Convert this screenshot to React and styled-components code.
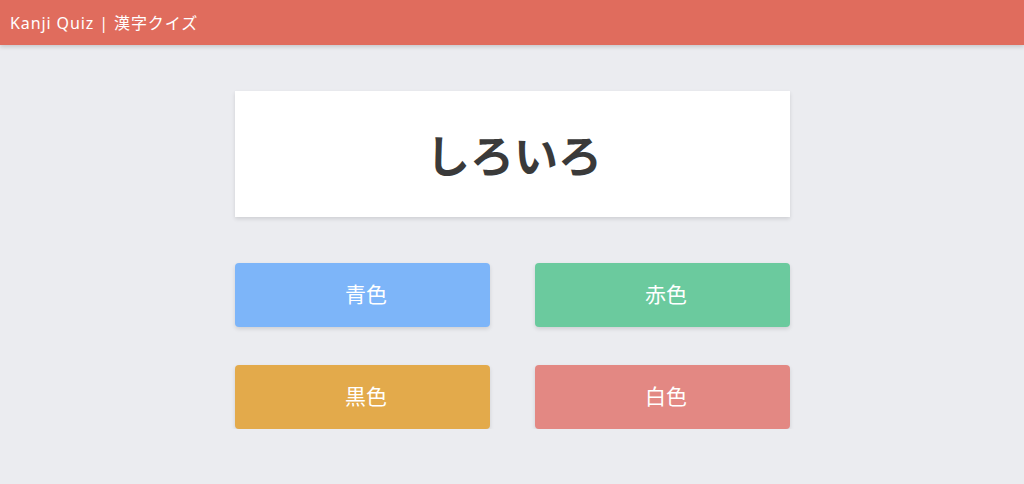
import styled, { createGlobalStyle } from 'styled-components';

const GlobalStyle = createGlobalStyle`
  body {
    margin: 0;
    background-color: #ebecf0;
    font-family: "Noto Sans", "Noto Sans CJK JP", sans-serif;
  }
`;

const choices = [
  { label: "青色", color: "#7db5f9" },
  { label: "赤色", color: "#6bca9e" },
  { label: "黒色", color: "#e3aa4b" },
  { label: "白色", color: "#e38883" },
];

const App = () => {
  return (
    <>
      <GlobalStyle />
      <Header>
        <HeaderTitle>Kanji Quiz | 漢字クイズ</HeaderTitle>
      </Header>
      <Main>
        <QuestionCard>
          <Question>しろいろ</Question>
        </QuestionCard>
        <Choices>
          {choices.map((c) => (
            <Choice key={c.label} color={c.color}>{c.label}</Choice>
          ))}
        </Choices>
      </Main>
    </>
  );
};

const Header = styled.header`
  height: 45px;
  background-color: #e06c5d;
  display: flex;
  align-items: center;
  padding: 0 10px;
  box-shadow: 0 2px 4px rgba(0, 0, 0, 0.15);
`;

const HeaderTitle = styled.h1`
  margin: 0 0 2px;
  color: white;
  font-size: 16px;
  font-weight: 400;
  letter-spacing: 0.9px;
`;

const Main = styled.main`
  width: 555px;
  margin: 46px auto 0;
`;

const QuestionCard = styled.div`
  height: 126px;
  background-color: white;
  display: flex;
  align-items: center;
  justify-content: center;
  box-shadow: 0 2px 4px rgba(0, 0, 0, 0.12);
`;

const Question = styled.h2`
  margin: 0 0 0 4px;
  font-size: 44px;
  font-weight: 700;
  color: #3a3a3a;
  letter-spacing: 0;
`;

const Choices = styled.div`
  margin-top: 46px;
  display: grid;
  grid-template-columns: 1fr 1fr;
  column-gap: 45px;
  row-gap: 38px;
`;

const Choice = styled.button`
  height: 64px;
  padding: 0 0 4px 8px;
  border: none;
  border-radius: 4px;
  background-color: ${(p) => p.color};
  color: white;
  font-family: "Noto Sans", "Noto Sans CJK JP", sans-serif;
  font-size: 21px;
  cursor: pointer;
  box-shadow: 0 2px 4px rgba(0, 0, 0, 0.12);
`;

export default App;
